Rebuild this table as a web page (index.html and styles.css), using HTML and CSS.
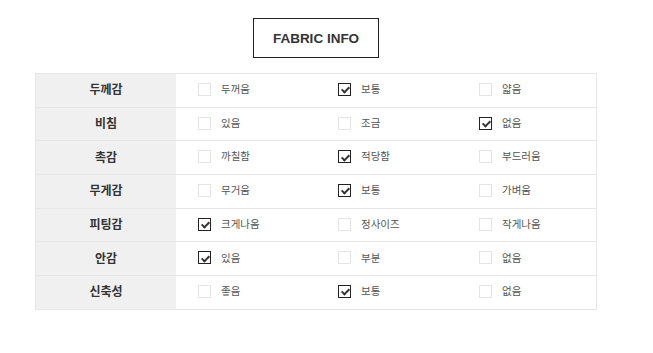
FILE: index.html
```html
<!DOCTYPE html>
<html lang="ko">
<head>
<meta charset="utf-8">
<link rel="stylesheet" href="styles.css">
</head>
<body>
<div class="page">
  <div class="title-wrap"><h2 class="title">FABRIC INFO</h2></div>
  <div class="table">
    <div class="row">
      <div class="label">두께감</div>
      <div class="opts">
        <div class="opt"><span class="box"></span><span class="txt">두꺼움</span></div>
        <div class="opt"><span class="box on"></span><span class="txt">보통</span></div>
        <div class="opt"><span class="box"></span><span class="txt">얇음</span></div>
      </div>
    </div>
    <div class="row">
      <div class="label">비침</div>
      <div class="opts">
        <div class="opt"><span class="box"></span><span class="txt">있음</span></div>
        <div class="opt"><span class="box"></span><span class="txt">조금</span></div>
        <div class="opt"><span class="box on"></span><span class="txt">없음</span></div>
      </div>
    </div>
    <div class="row">
      <div class="label">촉감</div>
      <div class="opts">
        <div class="opt"><span class="box"></span><span class="txt">까칠함</span></div>
        <div class="opt"><span class="box on"></span><span class="txt">적당함</span></div>
        <div class="opt"><span class="box"></span><span class="txt">부드러움</span></div>
      </div>
    </div>
    <div class="row">
      <div class="label">무게감</div>
      <div class="opts">
        <div class="opt"><span class="box"></span><span class="txt">무거움</span></div>
        <div class="opt"><span class="box on"></span><span class="txt">보통</span></div>
        <div class="opt"><span class="box"></span><span class="txt">가벼움</span></div>
      </div>
    </div>
    <div class="row">
      <div class="label">피팅감</div>
      <div class="opts">
        <div class="opt"><span class="box on"></span><span class="txt">크게나옴</span></div>
        <div class="opt"><span class="box"></span><span class="txt">정사이즈</span></div>
        <div class="opt"><span class="box"></span><span class="txt">작게나옴</span></div>
      </div>
    </div>
    <div class="row">
      <div class="label">안감</div>
      <div class="opts">
        <div class="opt"><span class="box on"></span><span class="txt">있음</span></div>
        <div class="opt"><span class="box"></span><span class="txt">부분</span></div>
        <div class="opt"><span class="box"></span><span class="txt">없음</span></div>
      </div>
    </div>
    <div class="row">
      <div class="label">신축성</div>
      <div class="opts">
        <div class="opt"><span class="box"></span><span class="txt">좋음</span></div>
        <div class="opt"><span class="box on"></span><span class="txt">보통</span></div>
        <div class="opt"><span class="box"></span><span class="txt">없음</span></div>
      </div>
    </div>
  </div>
</div>
</body>
</html>
```
FILE: styles.css
```css
* { box-sizing: border-box; }
html, body { margin: 0; padding: 0; background: #fff; }
body { font-family: "Noto Sans CJK KR", "Noto Sans", sans-serif; color: #333; }
.page { padding: 18px 0 0 35px; width: 598px; }
.title-wrap { display: flex; padding-left: 218px; margin-bottom: 15px; }
.title {
  margin: 0;
  width: 126px;
  height: 40px;
  border: 1px solid #222;
  display: flex;
  align-items: center;
  justify-content: center;
  font-family: "Liberation Sans", Arial, sans-serif;
  font-weight: bold;
  font-size: 13.5px;
  color: #333;
  letter-spacing: 0;
}
.table {
  width: 562px;
  border: 1px solid #e6e6e6;
  border-bottom: none;
}
.row {
  display: flex;
  height: 33.7px;
  border-bottom: 1px solid #e6e6e6;
}
.label {
  flex: none;
  width: 140px;
  background: #f0f0f0;
  display: flex;
  align-items: center;
  justify-content: center;
  padding-bottom: 3px;
  font-weight: bold;
  font-size: 12px;
  color: #333;
}
.opts {
  flex: 1;
  min-width: 0;
  display: grid;
  grid-template-columns: 140px 141px 1fr;
  padding: 0 0 2px 22px;
  align-items: center;
}
.opt { display: flex; align-items: center; }
.box {
  width: 13px;
  height: 13px;
  border: 1px solid #e4e4e4;
  background: #fff;
  position: relative;
  flex: none;
}
.box.on { border-color: #222; }
.box.on::after {
  content: "";
  position: absolute;
  left: 3.5px;
  top: 1.5px;
  width: 3px;
  height: 6px;
  border: solid #333;
  border-width: 0 2px 2px 0;
  transform: rotate(45deg);
}
.txt {
  margin-left: 10px;
  font-size: 10.5px;
  color: #555;
  line-height: 1;
}
```
